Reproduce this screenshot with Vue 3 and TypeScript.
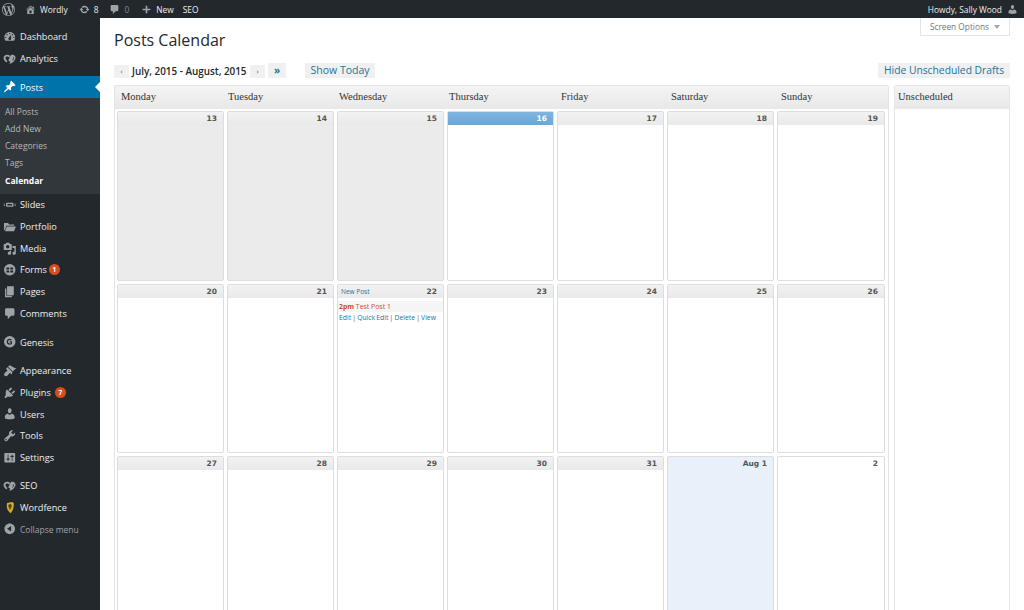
<script setup lang="ts">
interface MenuItem { label: string; icon: string; badge?: string; wide?: boolean }

const P: Record<string, string> = {
  wp: 'M20 10c0-5.51-4.49-10-10-10C4.48 0 0 4.49 0 10c0 5.52 4.48 10 10 10 5.51 0 10-4.48 10-10zM7.78 15.37L4.37 6.22c.55-.02 1.17-.08 1.17-.08.5-.06.44-1.13-.06-1.11 0 0-1.45.11-2.37.11-.18 0-.37 0-.58-.01C4.12 2.69 6.87 1.11 10 1.11c2.33 0 4.45.87 6.05 2.34-.68-.11-1.65.39-1.65 1.58 0 .74.45 1.36.9 2.1.35.61.55 1.36.55 2.46 0 1.49-1.4 5-1.4 5l-3.03-8.37c.54-.02.82-.17.82-.17.5-.05.44-1.25-.06-1.22 0 0-1.44.12-2.38.12-.87 0-2.33-.12-2.33-.12-.5-.03-.56 1.2-.06 1.22l.92.08 1.26 3.41zM17.41 10c.24-.64.74-1.87.43-4.25.7 1.29 1.05 2.71 1.05 4.25 0 3.29-1.73 6.24-4.4 7.78.97-2.59 1.94-5.2 2.92-7.78zM6.1 18.09C3.12 16.65 1.11 13.53 1.11 10c0-1.3.23-2.48.72-3.59C3.25 10.3 4.67 14.2 6.1 18.09zm4.03-6.63l2.58 6.98c-.86.29-1.76.45-2.71.45-.79 0-1.57-.11-2.29-.33.81-2.38 1.62-4.74 2.42-7.1z',
  home: 'M16 8.5l1.53 1.53-1.06 1.06L10 4.62l-6.47 6.47-1.06-1.06L10 2.5l4 4v-2h2v4zm-6-2.46l6 5.99V18H4v-5.97zM12 17v-5H8v5h4z',
  update: 'M10.2 3.28c3.53 0 6.43 2.61 6.92 6h2.08l-3.5 4-3.5-4h2.32c-.45-1.97-2.21-3.45-4.32-3.45-1.45 0-2.73.71-3.54 1.78L4.95 5.66C6.23 4.2 8.11 3.28 10.2 3.28zm-.4 13.44c-3.52 0-6.43-2.61-6.92-6H.8l3.5-4c1.17 1.33 2.33 2.67 3.5 4H5.48c.45 1.97 2.21 3.45 4.32 3.45 1.45 0 2.73-.71 3.54-1.78l1.71 1.95c-1.28 1.46-3.15 2.38-5.25 2.38z',
  comment: 'M5 2h10q2 0 2 2v7q0 2-2 2h-3l-5 5v-5H5q-2 0-2-2V4q0-2 2-2z',
  plus: 'M17 8.5v3h-5.5V17h-3v-5.5H3v-3h5.5V3h3v5.5z',
  dashboard: 'M3.76 16h12.48c1.1-1.37 1.76-3.11 1.76-5 0-4.42-3.58-8-8-8s-8 3.58-8 8c0 1.89.66 3.63 1.76 5zM10 4c.55 0 1 .45 1 1s-.45 1-1 1-1-.45-1-1 .45-1 1-1zM6 6c.55 0 1 .45 1 1s-.45 1-1 1-1-.45-1-1 .45-1 1-1zm8 0c.55 0 1 .45 1 1s-.45 1-1 1-1-.45-1-1 .45-1 1-1zm-5.37 5.55L12 7v6c0 1.1-.9 2-2 2s-2-.9-2-2c0-.57.24-1.08.63-1.45zM4 10c.55 0 1 .45 1 1s-.45 1-1 1-1-.45-1-1 .45-1 1-1zm12 0c.55 0 1 .45 1 1s-.45 1-1 1-1-.45-1-1 .45-1 1-1z',
  yoast: 'M6 4C3 4 .8 6 .8 8.8c0 2.4 1.8 4.6 4.2 6.7l1.6-2C5 12 3.6 10.4 3.6 8.9 3.6 7.5 4.7 6.6 6 6.6c1 0 2.2.6 3 1.6l1.6-2.4C9.4 4.7 7.6 4 6 4zm8 0c-.8 0-1.6.2-2.3.5l-4 8.2c.9.5 1.9 1 3 1.6l-1.2 3.2c2.6-.3 4.7-1.6 6.3-3.3 1.6-1.8 2.8-4 2.8-5.5C18.6 6 16.8 4 14 4zm1.4 7.6c-.5.7-1 1.3-1.6 1.8l1.8-6.5c.4.4.6.9.6 1.5 0 1-.3 2.1-.8 3.2z',
  pin: 'M10.44 3.02l1.82-1.82 6.36 6.35-1.83 1.82c-1.05-.68-2.48-.57-3.41.36l-.75.75c-.92.93-1.04 2.35-.35 3.41l-1.83 1.82-2.41-2.41-2.8 2.79c-.42.42-3.38 2.71-3.8 2.29s1.86-3.39 2.28-3.81l2.79-2.79L4.1 9.36l1.83-1.82c1.05.69 2.48.57 3.4-.36l.75-.75c.93-.92 1.05-2.35.36-3.41z',
  slides: 'M5.5 7h9q1 0 1 1v4q0 1-1 1h-9q-1 0-1-1V8q0-1 1-1zm1 2v2h7V9zM1 8.500h2v1H1zm0 2h2v1H1zm16-2h2v1h-2zm0 2h2v1h-2z',
  folder: 'M1.500 4.500h6l1.500 2h7.500v2H5L2.500 15.500l-1-1zM5.700 9.500H19l-2.500 7H2.900z',
  media: 'M13 11V4c0-.55-.45-1-1-1h-1.670L9 1H5L3.670 3H2c-.55 0-1 .45-1 1v7c0 .55.45 1 1 1h10c.55 0 1-.45 1-1zM7 4.500c1.380 0 2.500 1.120 2.500 2.500S8.380 9.500 7 9.500 4.500 8.380 4.500 7 5.620 4.500 7 4.500zM14 6h5v10.500c0 1.380-1.120 2.500-2.500 2.500S14 17.880 14 16.500s1.120-2.500 2.500-2.500c.17 0 .34.02.5.05V9h-3V6zm-4 8.050V13h2v3.500c0 1.380-1.120 2.500-2.500 2.500S7 17.880 7 16.500 8.120 14 9.500 14c.17 0 .34.02.5.05z',
  forms: 'M10 1.500a8.500 8.500 0 1 0 0 17 8.500 8.500 0 0 0 0-17zM5 6.500h4.200v3H5zm5.800 0H15v3h-4.200zM5 11h4.200v3H5zm5.800 0H15v3h-4.200z',
  page: 'M6 15V2h10v13H6zm-1 1h8v2H3V5h2v11z',
  genesis: 'M10 1.500a8.500 8.500 0 1 0 0 17 8.500 8.500 0 0 0 0-17zm3.300 11.600c-.8.800-2 1.300-3.300 1.300a4.400 4.400 0 0 1 0-8.800c1.200 0 2.200.4 3 1.100l-1.200 1.300c-.5-.4-1.100-.7-1.800-.7a2.600 2.600 0 0 0 0 5.200c.5 0 1-.1 1.400-.4V10.800H10V9.300h3.300z',
  appearance: 'M14.480 11.060L7.410 3.990l1.500-1.500c.5-.56 2.300-.47 3.510.32 1.210.8 1.430 1.280 2.910 2.100 1.180.64 2.450 1.260 4.450.85zm-.71.71L6.700 4.700 4.930 6.470c-.39.39-.39 1.020 0 1.410l1.060 1.060c.39.39.39 1.030 0 1.420-.6.6-1.430 1.150-2.210 1.730-.35.26-.7.530-1.010.84-1.340 1.340-1.500 3.400-.4 4.500s3.200.9 4.500-.4c.31-.31.58-.66.84-1.010.58-.78 1.130-1.610 1.730-2.210.39-.39 1.030-.39 1.420 0l1.060 1.060c.39.39 1.020.39 1.410 0z',
  plugins: 'M13.110 4.360L9.870 7.600 8 5.730l3.240-3.240c.35-.34 1.050-.2 1.560.32.52.51.66 1.210.31 1.550zm-8 1.770l.91-1.120 9.010 9.010-1.190.84c-.71.71-2.630 1.160-3.820 1.160H6.140L4.900 17.260c-.59.59-1.540.59-2.120 0-.59-.58-.59-1.530 0-2.120l1.240-1.240v-3.880c0-1.130.4-3.190 1.090-3.890zm7.260 3.970l3.240-3.240c.34-.35 1.040-.21 1.550.31.52.51.66 1.210.31 1.550l-3.240 3.250z',
  users: 'M10 9.250c-2.270 0-2.730-3.440-2.730-3.440C7 4.020 7.820 2 9.970 2c2.160 0 2.980 2.020 2.710 3.810 0 0-.41 3.440-2.680 3.440zm0 2.570L12.720 10c2.390 0 4.520 2.330 4.520 4.530v2.490s-3.650 1.130-7.240 1.130c-3.650 0-7.240-1.130-7.240-1.130v-2.490c0-2.250 1.940-4.480 4.470-4.480z',
  tools: 'M16.680 9.770c-1.340 1.340-3.300 1.670-4.950.99l-5.410 6.520c-.99.99-2.590.99-3.580 0s-.99-2.59 0-3.570l6.520-5.420c-.68-1.650-.35-3.610.99-4.950 1.280-1.280 3.120-1.620 4.720-1.060l-2.890 2.890 2.820 2.820 2.860-2.870c.53 1.580.18 3.390-1.080 4.650zM3.810 16.210c.4.39 1.040.39 1.430 0 .4-.4.4-1.040 0-1.430-.39-.4-1.030-.4-1.430 0-.39.39-.39 1.030 0 1.430z',
  settings: 'M18 16V4c0-.55-.45-1-1-1H3c-.55 0-1 .45-1 1v12c0 .55.45 1 1 1h14c.55 0 1-.45 1-1zM8 11h1c.55 0 1 .45 1 1s-.45 1-1 1H8v1.500c0 .28-.22.5-.5.5s-.5-.22-.5-.5V13H6c-.55 0-1-.45-1-1s.45-1 1-1h1V5.500c0-.28.22-.5.5-.5s.5.22.5.5V11zm5-2h-1c-.55 0-1-.45-1-1s.45-1 1-1h1V5.500c0-.28.22-.5.5-.5s.5.22.5.5V7h1c.55 0 1 .45 1 1s-.45 1-1 1h-1v5.500c0 .28-.22.5-.5.5s-.5-.22-.5-.5V9z',
  collapse: 'M10 2.160c4.330 0 7.840 3.510 7.840 7.840s-3.510 7.840-7.840 7.840S2.160 14.330 2.160 10 5.710 2.160 10 2.160zm2 11.840V6l-6 4z',
}

const groupA: MenuItem[] = [
  { label: 'Dashboard', icon: 'dashboard' },
  { label: 'Analytics', icon: 'yoast' },
]
const groupC: MenuItem[] = [
  { label: 'Slides', icon: 'slides' },
  { label: 'Portfolio', icon: 'folder' },
  { label: 'Media', icon: 'media' },
  { label: 'Forms', icon: 'forms', badge: '1' },
  { label: 'Pages', icon: 'page' },
  { label: 'Comments', icon: 'comment' },
]
const groupD: MenuItem[] = [{ label: 'Genesis', icon: 'genesis' }]
const groupE: MenuItem[] = [
  { label: 'Appearance', icon: 'appearance' },
  { label: 'Plugins', icon: 'plugins', badge: '7', wide: true },
  { label: 'Users', icon: 'users' },
  { label: 'Tools', icon: 'tools' },
  { label: 'Settings', icon: 'settings' },
]
const groups = [groupC, groupD, groupE]
const submenu = ['All Posts', 'Add New', 'Categories', 'Tags', 'Calendar']
const days = ['Monday', 'Tuesday', 'Wednesday', 'Thursday', 'Friday', 'Saturday', 'Sunday']

interface Cell { n: string; kind: string }
const weeks: Cell[][] = [
  [
    { n: '13', kind: 'past' }, { n: '14', kind: 'past' }, { n: '15', kind: 'past' },
    { n: '16', kind: 'now' }, { n: '17', kind: '' }, { n: '18', kind: '' }, { n: '19', kind: '' },
  ],
  ['20', '21', '22', '23', '24', '25', '26'].map((n) => ({ n, kind: '' })),
  [
    { n: '27', kind: '' }, { n: '28', kind: '' }, { n: '29', kind: '' }, { n: '30', kind: '' },
    { n: '31', kind: '' }, { n: 'Aug 1', kind: 'next' }, { n: '2', kind: 'plain' },
  ],
]
</script>

<template>
  <div class="admin">
    <header class="bar">
      <div class="bar-left">
        <svg class="bar-ico wp" viewBox="0 0 20 20"><path :d="P.wp" /></svg>
        <svg class="bar-ico home" viewBox="0 0 20 20"><path :d="P.home" /></svg>
        <span class="bar-txt site">Wordly</span>
        <svg class="bar-ico upd" viewBox="0 0 20 20"><path :d="P.update" /></svg>
        <span class="bar-txt">8</span>
        <svg class="bar-ico cmt" viewBox="0 0 20 20"><path :d="P.comment" /></svg>
        <span class="bar-txt dim">0</span>
        <svg class="bar-ico pls" viewBox="0 0 20 20"><path :d="P.plus" /></svg>
        <span class="bar-txt">New</span>
        <span class="bar-txt seo">SEO</span>
      </div>
      <div class="bar-right">
        <span class="bar-txt">Howdy, Sally Wood</span>
        <svg class="bar-ico usr" viewBox="0 0 20 20"><path :d="P.users" /></svg>
      </div>
    </header>

    <div class="shell">
      <nav class="side">
        <ul class="group first">
          <li v-for="m in groupA" :key="m.label" class="item">
            <svg class="mi" viewBox="0 0 20 20"><path :d="P[m.icon]" /></svg>
            <span>{{ m.label }}</span>
          </li>
        </ul>

        <div class="posts">
          <div class="item current">
            <svg class="mi" viewBox="0 0 20 20"><path :d="P.pin" /></svg>
            <span>Posts</span>
          </div>
          <ul class="sub">
            <li v-for="s in submenu" :key="s" :class="{ on: s === 'Calendar' }">{{ s }}</li>
          </ul>
        </div>

        <ul v-for="(g, gi) in groups" :key="gi" class="group" :class="{ flush: gi === 0 }">
          <li v-for="m in g" :key="m.label" class="item">
            <svg class="mi" viewBox="0 0 20 20"><path :d="P[m.icon]" /></svg>
            <span>{{ m.label }}</span>
            <b v-if="m.badge" class="badge" :class="{ wide: m.wide }">{{ m.badge }}</b>
          </li>
        </ul>

        <ul class="group last">
          <li class="item">
            <svg class="mi" viewBox="0 0 20 20"><path :d="P.yoast" /></svg>
            <span>SEO</span>
          </li>
          <li class="item">
            <svg class="mi" viewBox="0 0 20 20">
              <path d="M6 3l8-1.500 2 2c.3 6.500-1.600 11-4.500 14.500C8 16 5.500 12 5.500 7z" fill="#d9ab1f" />
              <path d="M10.500 4.500a2.800 2.800 0 0 0-2.800 2.800c0 1.200.7 2 1.400 2.600l.4 2.600h1.800l.4-2.600c.7-.6 1.400-1.400 1.400-2.600a2.800 2.800 0 0 0-2.600-2.800z" fill="#4a4634" />
            </svg>
            <span>Wordfence</span>
          </li>
          <li class="item collapse">
            <svg class="mi" viewBox="0 0 20 20"><path :d="P.collapse" /></svg>
            <span>Collapse menu</span>
          </li>
        </ul>
      </nav>

      <main class="main">
        <div class="title-row">
          <h1>Posts Calendar</h1>
          <div class="screen-tab">Screen Options <i class="caret"></i></div>
        </div>

        <div class="tools">
          <div class="nav">
            <a class="btn small">‹</a>
            <strong class="range">July, 2015 - August, 2015</strong>
            <a class="btn small">›</a>
            <a class="btn dbl">»</a>
            <a class="btn show">Show Today</a>
          </div>
          <a class="btn hide">Hide Unscheduled Drafts</a>
        </div>

        <div class="panels">
          <section class="panel cal">
            <div class="panel-head days">
              <span v-for="d in days" :key="d">{{ d }}</span>
            </div>
            <div class="grid">
              <div v-for="(w, wi) in weeks" :key="wi" class="week" :class="'w' + wi">
                <div v-for="c in w" :key="c.n" class="cell" :class="c.kind">
                  <div class="cell-head">
                    <a v-if="c.n === '22'" class="new">New Post</a>
                    <span class="num">{{ c.n }}</span>
                  </div>
                  <template v-if="c.n === '22'">
                    <div class="post"><b>2pm</b> Test Post 1</div>
                    <div class="actions">
                      <a>Edit</a> | <a>Quick Edit</a> | <a>Delete</a> | <a>View</a>
                    </div>
                  </template>
                </div>
              </div>
            </div>
          </section>
          <section class="panel unsched">
            <div class="panel-head">Unscheduled</div>
          </section>
        </div>
      </main>
    </div>
  </div>
</template>

<style>
html, body { margin: 0; background: #fff; overflow: hidden; }
</style>

<style scoped>
* { box-sizing: border-box; }
ul { list-style: none; margin: 0; padding: 0; }
.admin {
  width: 1024px;
  height: 610px;
  overflow: hidden;
  display: flex;
  flex-direction: column;
  font-family: "Open Sans", "Liberation Sans", sans-serif;
  background: #fff;
}
.bar {
  height: 18px;
  flex: none;
  background: #23282d;
  display: flex;
  justify-content: space-between;
  align-items: center;
  padding: 0 6px 0 2px;
}
.bar-left, .bar-right { display: flex; align-items: center; }
.bar-txt { font-size: 8.4px; font-weight: 500; color: #eee; white-space: nowrap; }
.bar-txt.dim { color: #82878c; }
.bar-ico { fill: #9ea3a8; flex: none; }
.wp { width: 13px; height: 13px; }
.home { width: 11px; height: 11px; margin-left: 10px; }
.site { margin-left: 4px; }
.upd { width: 11px; height: 11px; margin-left: 11px; }
.upd + .bar-txt { margin-left: 4px; }
.cmt { width: 11px; height: 11px; margin-left: 11px; }
.cmt + .bar-txt { margin-left: 4px; }
.pls { width: 11px; height: 11px; margin-left: 12px; }
.pls + .bar-txt { margin-left: 4px; }
.seo { margin-left: 9px; }
.usr { width: 11px; height: 11px; margin-left: 5px; }

.shell { flex: 1; display: flex; min-height: 0; }
.side {
  width: 100px;
  flex: none;
  background: #23282d;
  color: #eee;
  font-size: 9.2px;
  font-weight: 500;
}
.group { margin-top: 7px; }
.group.first { margin-top: 8px; }
.group.flush { margin-top: 0; }
.group.last { margin-top: 6.5px; }
.item {
  height: 21.7px;
  display: flex;
  align-items: center;
  padding-left: 3px;
  color: #eee;
  position: relative;
}
.item > span { margin-left: 3.5px; }
.mi { width: 13.5px; height: 13.5px; fill: #9ea3a8; flex: none; }
.posts { margin-top: 7px; background: #32373c; }
.current { background: #0073aa; color: #fff; }
.current .mi { fill: #fff; }
.current::after {
  content: "";
  position: absolute;
  right: 0;
  top: 50%;
  margin-top: -5px;
  border: 5px solid transparent;
  border-right-color: #fff;
  border-left-width: 0;
}
.sub { height: 96px; padding-top: 4.5px; }
.sub li {
  height: 17.3px;
  line-height: 17.3px;
  padding-left: 5px;
  font-size: 8.5px;
  font-weight: 400;
  color: #b4b9be;
}
.sub li.on { color: #fff; font-weight: 700; }
.badge {
  margin-left: 2px;
  width: 11px;
  height: 11px;
  flex: none;
  border-radius: 50%;
  background: #d54e21;
  color: #fff;
  font-size: 6.5px;
  line-height: 11px;
  text-align: center;
  font-weight: 700;
}
.badge.wide { margin-left: 4px; }
.collapse { color: #9ea3a8; font-size: 8.5px; font-weight: 400; }

.main { flex: 1; min-width: 0; padding: 0 14px; color: #23282d; }
.title-row { display: flex; justify-content: space-between; align-items: flex-start; height: 45px; }
h1 {
  margin: 12px 0 0;
  font-size: 16px;
  line-height: 20px;
  font-weight: 400;
  color: #23282d;
}
.screen-tab {
  width: 90px;
  height: 18px;
  border: 1px solid #e5e5e5;
  border-top: 0;
  font-size: 8.3px;
  line-height: 17px;
  color: #72777c;
  text-align: center;
  background: #fff;
}
.caret {
  display: inline-block;
  margin-left: 3px;
  vertical-align: 1px;
  border: 3px solid transparent;
  border-top: 4px solid #a0a5aa;
  border-bottom: 0;
}
.tools { display: flex; justify-content: space-between; align-items: center; height: 15px; }
.nav { display: flex; align-items: center; }
.btn { background: #f0f0f0; color: #21759b; font-size: 10.5px; text-align: center; }
.small { width: 15px; height: 13px; line-height: 12px; font-size: 8px; margin-top: 2px; }
.range { margin: 0 3px; width: 115px; font-size: 9.9px; font-weight: 600; white-space: nowrap; color: #23282d; }
.dbl { width: 18px; height: 15px; line-height: 14px; margin-left: 3px; font-weight: 700; font-size: 10px; }
.show { width: 70px; height: 15px; line-height: 15px; margin-left: 19px; }
.hide { width: 132px; height: 15px; line-height: 15px; font-size: 10.3px; }

.panels { display: flex; gap: 5px; margin-top: 7px; align-items: flex-start; }
.panel { border: 1px solid #e5e5e5; border-radius: 2px 2px 0 0; height: 600px; }
.cal { flex: 1; min-width: 0; }
.unsched { width: 116px; flex: none; }
.panel-head {
  height: 23px;
  background: linear-gradient(#f4f4f4, #e8e8e8);
  font-family: "Liberation Serif", "Times New Roman", serif;
  font-size: 10.5px;
  line-height: 22px;
  padding-left: 3px;
  color: #333;
}
.days { display: grid; grid-template-columns: 107px 111px 110px 112px 110px 110px 1fr; padding: 0 0 0 6px; }
.grid { padding: 2px 3px 0 2px; display: flex; flex-direction: column; gap: 3px; }
.week { display: grid; grid-template-columns: repeat(6, 107px) 1fr; gap: 3px; height: 169px; }
.week.w0 { height: 170px; }
.week.w2 { height: 400px; }
.cell { border: 1px solid #ddd; border-radius: 2px; background: #fff; min-width: 0; }
.cell-head {
  height: 12.5px;
  background: linear-gradient(#f2f2f2, #e9e9e9);
  display: flex;
  justify-content: space-between;
  align-items: center;
  padding: 0 6px 0 3px;
  color: #555;
}
.num { margin-left: auto; font-weight: 700; font-family: "DejaVu Sans", sans-serif; font-size: 7.5px; }
.new { color: #21759b; font-size: 6.5px; }
.past { background: #ebebeb; }
.now .cell-head { background: linear-gradient(#7fb5e0, #6aa6d6); color: #fff; }
.next { background: #e8f0fa; }
.next .cell-head { background: none; }
.plain .cell-head { background: none; }
.post {
  margin: 3px 0 0;
  height: 11px;
  line-height: 11px;
  padding-left: 1px;
  font-size: 6.9px;
  color: #d54e21;
  background: #f5f5f5;
}
.actions { margin-top: 0.5px; padding-left: 1px; font-size: 6.8px; line-height: 11px; color: #555; white-space: nowrap; word-spacing: -0.6px; }
.actions a { color: #21759b; }
</style>
